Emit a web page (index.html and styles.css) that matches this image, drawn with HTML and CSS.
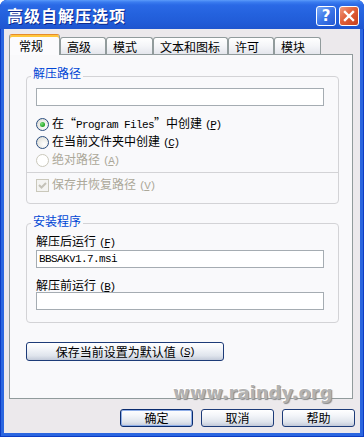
FILE: index.html
```html
<!DOCTYPE html>
<html lang="zh-CN">
<head>
<meta charset="utf-8">
<link rel="stylesheet" href="styles.css">
</head>
<body>
<div class="window">
  <div class="titlebar">
    <span class="title">高级自解压选项</span>
    <div class="tb-buttons">
      <span class="tb-btn help">?</span>
      <span class="tb-btn close"><svg width="18" height="18" viewBox="0 0 18 18"><path d="M5 5 L13 13 M13 5 L5 13" stroke="#fff" stroke-width="2.4" stroke-linecap="square"/></svg></span>
    </div>
  </div>
  <div class="client">
    <div class="tabs">
      <div class="tab active w0">常规</div>
      <div class="tab w1">高级</div>
      <div class="tab w2">模式</div>
      <div class="tab w3">文本和图标</div>
      <div class="tab w4">许可</div>
      <div class="tab w5">模块</div>
    </div>
    <div class="panel">
      <div class="group g1">
        <div class="group-title">解压路径</div>
        <div class="input first"></div>
        <div class="opt r1"><span class="radio checked"></span><span>在<span class="q qo">“</span><span class="en">Program Files</span><span class="q qc">”</span>中创建<span class="key">(<u>P</u>)</span></span></div>
        <div class="opt"><span class="radio"></span><span>在当前文件夹中创建<span class="key">(<u>C</u>)</span></span></div>
        <div class="opt disabled"><span class="radio"></span><span>绝对路径<span class="key">(<u>A</u>)</span></span></div>
        <div class="sub">
          <div class="opt disabled"><span class="check"><svg width="11" height="11" viewBox="0 0 11 11"><path d="M2 5 L4.5 7.5 L9 3" fill="none" stroke="#C4C2B8" stroke-width="2"/></svg></span><span>保存并恢复路径<span class="key">(<u>V</u>)</span></span></div>
        </div>
      </div>
      <div class="group g2">
        <div class="group-title">安装程序</div>
        <div class="field-label l1">解压后运行<span class="key">(<u>F</u>)</span></div>
        <div class="input">BBSAKv1.7.msi</div>
        <div class="field-label l2">解压前运行<span class="key">(<u>B</u>)</span></div>
        <div class="input"></div>
      </div>
      <div class="btn save">保存当前设置为默认值<span class="key">(<u>S</u>)</span></div>
    </div>
    <div class="actions">
      <div class="btn default">确定</div>
      <div class="btn">取消</div>
      <div class="btn">帮助</div>
    </div>
  </div>
  <div class="watermark">www.raindy.org</div>
</div>
</body>
</html>
```
FILE: styles.css
```css
html, body {
  margin: 0;
  padding: 0;
}
body {
  width: 364px;
  height: 437px;
  background: #ffffff;
  font-family: "Noto Sans CJK SC", sans-serif;
  font-size: 12px;
  line-height: 14px;
  color: #000;
  overflow: hidden;
}
.window {
  position: relative;
  width: 364px;
  height: 437px;
  display: flex;
  flex-direction: column;
  border-radius: 7px 7px 0 0;
  overflow: hidden;
  background: #2B66E0;
  box-shadow: inset 0 0 0 1px #0C3CC4;
}
.titlebar {
  flex: none;
  height: 29px;
  display: flex;
  align-items: center;
  padding: 0 5px 0 7px;
  background: linear-gradient(to bottom, #5C9BFA 0px, #3B7DF0 2px, #2A69E6 5px, #2462DE 14px, #215CD8 22px, #1E55CF 29px);
}
.title {
  color: #fff;
  font-weight: bold;
  font-size: 16px;
  line-height: 20px;
  letter-spacing: 1px;
  text-shadow: 1px 1px 0 #0E2B8E;
}
.tb-buttons {
  margin-left: auto;
  align-self: flex-start;
  margin-top: 6px;
  display: flex;
  gap: 3px;
}
.tb-btn {
  width: 20px;
  height: 20px;
  box-sizing: border-box;
  border: 1px solid #fff;
  border-radius: 3px;
  display: flex;
  align-items: center;
  justify-content: center;
}
.help {
  background: linear-gradient(135deg, #7BAAF7, #3A75E8 50%, #2558D2);
  color: #fff;
  font-family: "DejaVu Sans", sans-serif;
  font-weight: bold;
  font-size: 15px;
}
.close {
  background: linear-gradient(135deg, #F29A7E, #E0603A 45%, #C8401C);
}
.client {
  flex: 1;
  margin: 0 4px 4px;
  background: #ECE9EC;
  padding: 5px 5px 0 5px;
  display: flex;
  flex-direction: column;
}
.tabs {
  display: flex;
  align-items: flex-end;
  height: 21px;
  margin-bottom: -1px;
  position: relative;
  z-index: 1;
}
.tab {
  box-sizing: border-box;
  height: 17px;
  margin-bottom: 1px;
  border: 1px solid #919B9C;
  border-bottom: none;
  border-radius: 3px 3px 0 0;
  background: linear-gradient(to bottom, #FFFFFF, #F4F5F8 50%, #E4E6EC);
  padding-left: 6px;
  line-height: 18px;
  white-space: nowrap;
}
.tab.active {
  height: 21px;
  margin-bottom: 0;
  border-top: 1px solid #E68B2C;
  box-shadow: inset 0 2px 0 #FFC73C;
  background: #FBFBFD;
  padding-left: 9px;
  padding-top: 3px;
  line-height: 16px;
}
.w0 { width: 51px; }
.w1 { width: 46px; }
.w2 { width: 47px; }
.w3 { width: 75px; }
.w4 { width: 46px; }
.w5 { width: 47px; }
.panel {
  width: 344px;
  height: 345px;
  box-sizing: border-box;
  border: 1px solid #919B9C;
  background: #F9F9FB;
  padding: 0 0 0 16px;
  display: flex;
  flex-direction: column;
}
.group {
  width: 313px;
  box-sizing: border-box;
  border: 1px solid #D3D3D6;
  border-radius: 4px;
  padding: 0 9px;
  display: flex;
  flex-direction: column;
}
.g1 {
  margin-top: 21px;
  padding-bottom: 0;
}
.g2 {
  margin-top: 19px;
  padding-bottom: 12px;
}
.group-title {
  align-self: flex-start;
  height: 14px;
  margin: -11px 0 0 -5px;
  padding: 0 2px;
  background: #F9F9FB;
  color: #0046D5;
}
.g2 .group-title {
  margin-top: -10px;
}
.input {
  width: 288px;
  height: 18px;
  box-sizing: border-box;
  border: 1px solid #A5ACB2;
  background: #fff;
  padding-left: 2px;
  font-family: "Liberation Mono", monospace;
  font-size: 11px;
  letter-spacing: -0.6px;
  line-height: 16px;
}
.input.first {
  margin-top: 8px;
}
.opt {
  height: 18px;
  display: flex;
  align-items: center;
  white-space: nowrap;
}
.opt.r1 {
  margin-top: 9px;
}
.radio {
  width: 13px;
  height: 13px;
  box-sizing: border-box;
  border: 1px solid #2B4E80;
  border-radius: 50%;
  background: radial-gradient(circle at 65% 65%, #FFFFFF 0%, #F0F0EC 40%, #D6D5CE 100%);
  margin-right: 3px;
  display: flex;
  align-items: center;
  justify-content: center;
  flex: none;
}
.radio.checked::after {
  content: "";
  width: 5px;
  height: 5px;
  border-radius: 50%;
  background: radial-gradient(circle at 35% 35%, #7CE07C, #21A121 70%);
}
.opt.disabled {
  color: #ACA899;
}
.opt.disabled .radio {
  border-color: #CAC8BB;
  background: #FFFFFF;
}
.check {
  width: 13px;
  height: 13px;
  box-sizing: border-box;
  border: 1px solid #CAC8BB;
  background: #F4F4F2;
  margin-right: 3px;
  display: flex;
  align-items: center;
  justify-content: center;
  flex: none;
}
.sub {
  margin: 3px -9px 0;
  border-top: 1px solid #D3D3D6;
  padding: 3px 9px 9px;
}
.q {
  display: inline-block;
  width: 12px;
}
.qo {
  text-align: right;
}
.qc {
  text-align: left;
}
.en {
  font-family: "Liberation Mono", monospace;
  font-size: 11px;
  letter-spacing: -0.6px;
}
.key {
  font-family: "Liberation Mono", monospace;
  font-size: 11px;
  letter-spacing: -1.4px;
  margin-left: 3px;
}
.field-label {
  height: 14px;
  white-space: nowrap;
}
.field-label.l1 {
  margin-top: 6px;
  margin-bottom: 2px;
}
.field-label.l2 {
  margin-top: 10px;
}
.btn {
  box-sizing: border-box;
  height: 19px;
  border: 1px solid #1D3B78;
  border-radius: 3px;
  background: linear-gradient(to bottom, #FFFFFF 0%, #F3F5F9 35%, #DFE4EC 75%, #C3CAD9 100%);
  display: flex;
  align-items: center;
  justify-content: center;
  white-space: nowrap;
}
.save {
  width: 198px;
  margin-top: 19px;
}
.actions {
  display: flex;
  justify-content: flex-end;
  gap: 8px;
  margin-top: 10px;
}
.actions .btn {
  width: 73px;
  height: 18px;
}
.btn.default {
  border-color: #0B2C6E;
  box-shadow: inset 0 0 0 1px #8FAEE8;
}
.watermark {
  position: absolute;
  left: 173px;
  top: 382px;
  font-family: "DejaVu Sans", sans-serif;
  font-weight: bold;
  font-size: 18px;
  line-height: 22px;
  color: #B2B2B2;
  text-shadow: -1px -1px 0 #FFFFFF, 1px 1px 1px #8A8A8A;
  white-space: nowrap;
}
```
